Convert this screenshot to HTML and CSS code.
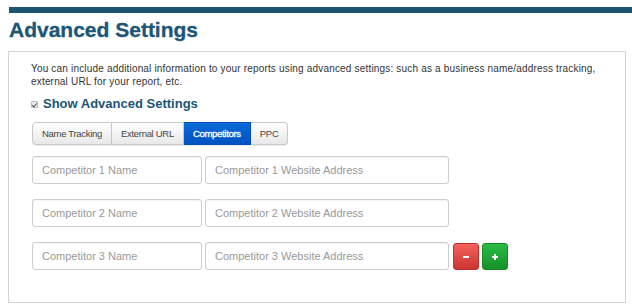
FILE: index.html
```html
<!DOCTYPE html>
<html lang="en">
<head>
    <meta charset="UTF-8">
    <title>Advanced Settings</title>
    <link rel="stylesheet" href="styles.css">
</head>
<body>
    <div class="top-bar"></div>
    <h1 class="page-title">Advanced Settings</h1>

    <div class="settings-panel">
        <p class="intro">You can include additional information to your reports using advanced settings: such as a business name/address tracking, external URL for your report, etc.</p>

        <label class="show-advanced">
            <input type="checkbox" checked>
            <span>Show Advanced Settings</span>
        </label>

        <!-- Tabs -->
        <div class="tabs">
            <button class="tab">Name Tracking</button>
            <button class="tab">External URL</button>
            <button class="tab active">Competitors</button>
            <button class="tab">PPC</button>
        </div>

        <!-- Competitor rows -->
        <div class="competitor-row">
            <input type="text" class="field name" placeholder="Competitor 1 Name">
            <input type="text" class="field url" placeholder="Competitor 1 Website Address">
        </div>
        <div class="competitor-row">
            <input type="text" class="field name" placeholder="Competitor 2 Name">
            <input type="text" class="field url" placeholder="Competitor 2 Website Address">
        </div>
        <div class="competitor-row">
            <input type="text" class="field name" placeholder="Competitor 3 Name">
            <input type="text" class="field url" placeholder="Competitor 3 Website Address">
            <button class="row-btn btn-remove" title="Remove"><span class="icon-minus"></span></button>
            <button class="row-btn btn-add" title="Add"><span class="icon-plus"></span></button>
        </div>
    </div>
</body>
</html>
```

FILE: styles.css
```css
/* Page */
body {
    margin: 0;
    padding: 7px 6px 0 8px;
    font-family: "Liberation Sans", Arial, sans-serif;
    color: #333;
    background: #fff;
}

.top-bar {
    height: 6px;
    margin: 0 -6px 0 1px;
    background-color: #1b5473;
}

.page-title {
    margin: 5px 0 9px 1px;
    font-size: 21px;
    line-height: 24px;
    font-weight: bold;
    color: #1b5676;
    -webkit-text-stroke: 0.3px #1b5676;
}

/* Panel */
.settings-panel {
    border: 1px solid #d4d4d4;
    padding: 10px 22px 31px 22px;
    height: 252px;
    box-sizing: border-box;
}

.intro {
    margin: 0;
    font-size: 10px;
    line-height: 13px;
    letter-spacing: 0.18px;
    color: #333;
}

.show-advanced {
    display: flex;
    align-items: center;
    margin-top: 8px;
    font-size: 13px;
    line-height: 16px;
    font-weight: bold;
    color: #1b5676;
}

.show-advanced input {
    appearance: none;
    width: 7px;
    height: 7px;
    margin: 1px 5px 0 0;
    border: 1px solid #bbb;
    border-radius: 1px;
    background: #eee;
    position: relative;
}

.show-advanced input:checked::after {
    content: "";
    position: absolute;
    left: 1px;
    top: 0;
    width: 2px;
    height: 4px;
    border: solid #555;
    border-width: 0 1px 1px 0;
    transform: rotate(40deg);
}

/* Tabs */
.tabs {
    display: flex;
    margin: 10px 0 11px 1px;
}

.tab {
    height: 23px;
    padding: 0 9px;
    font-family: "Liberation Sans", Arial, sans-serif;
    font-size: 9.5px;
    letter-spacing: -0.3px;
    color: #444;
    background: linear-gradient(#ffffff, #e8e8e8);
    border: 1px solid #c8c8c8;
    border-left: none;
    box-shadow: 0 1px 1px rgba(0, 0, 0, 0.08);
}

.tab:first-child {
    border-left: 1px solid #c8c8c8;
    border-radius: 4px 0 0 4px;
}

.tab:last-child {
    border-radius: 0 4px 4px 0;
}

.tab.active {
    color: #fff;
    -webkit-text-stroke: 0.3px #fff;
    background: linear-gradient(#0a6bd8, #0052c2);
    border-color: #0050b8;
}

/* Competitor inputs */
.competitor-row {
    display: flex;
    gap: 3px;
    margin: 0 0 15px 1px;
}

.field {
    height: 28px;
    box-sizing: border-box;
    padding: 0 9px;
    font-family: "Liberation Sans", Arial, sans-serif;
    font-size: 11px;
    border: 1px solid #cdcdcd;
    border-radius: 3px;
    box-shadow: inset 0 1px 1px rgba(0, 0, 0, 0.05);
}

.field::placeholder {
    color: #999;
}

.field.name {
    width: 170px;
}

.field.url {
    width: 244px;
}

.row-btn {
    width: 26px;
    height: 27px;
    padding: 0;
    margin-top: 1px;
    border-radius: 3px;
    display: flex;
    align-items: center;
    justify-content: center;
    cursor: pointer;
}

.btn-remove {
    margin-left: 1px;
    background: linear-gradient(#f4615c, #cc3430);
    border: 1px solid #c1322e;
}

.btn-add {
    background: linear-gradient(#2cbb45, #149127);
    border: 1px solid #148a25;
}

.icon-minus {
    width: 6px;
    height: 2px;
    background: #fff;
}

.icon-plus {
    width: 6px;
    height: 6px;
    background:
        linear-gradient(#fff, #fff) center / 6px 2px no-repeat,
        linear-gradient(#fff, #fff) center / 2px 6px no-repeat;
}
```
